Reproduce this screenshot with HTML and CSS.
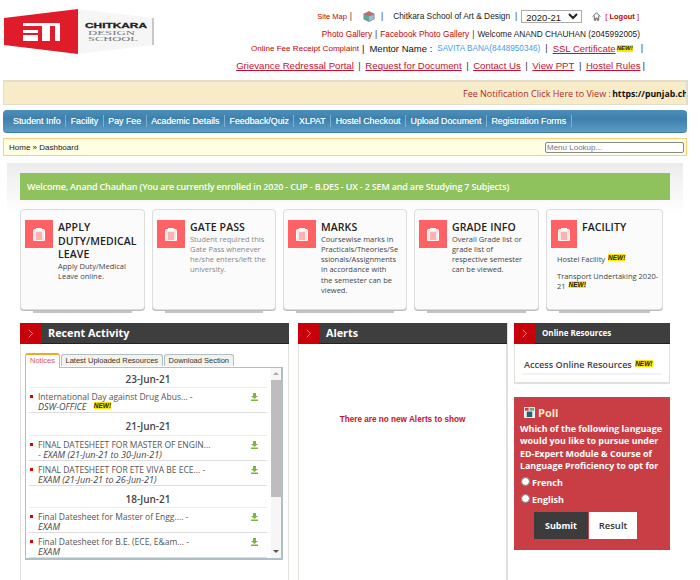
FILE: index.html
```html
<!DOCTYPE html>
<html lang="en">
<head>
<meta charset="utf-8">
<title>Dashboard</title>
<link rel="stylesheet" href="styles.css">
</head>
<body>
<svg class="defs" width="0" height="0" aria-hidden="true">
  <symbol id="clip" viewBox="0 0 12 13"><path d="M1.500 1.500h9a1 1 0 0 1 1 1v9.500a1 1 0 0 1-1 1h-9a1 1 0 0 1-1-1V2.500a1 1 0 0 1 1-1z" fill="#ffe6e6" stroke="#fff"/><path d="M3 0h6v3H3z" fill="#fff"/><path d="M3 5h6M3 7h6M3 9h6M3 11h6" stroke="#fe6265" stroke-width=".8"/></symbol>
  <symbol id="dl" viewBox="0 0 7 8"><path d="M2 0h3v3h2L3.500 6 0 3h2zM0 6.500h7V8H0z" fill="#7cb342"/></symbol>
  <symbol id="chev" viewBox="0 0 8 12"><path d="M1 1l5 5-5 5" fill="none" stroke="#f4c9c9"/></symbol>
</svg>
<div class="page">
  <header class="top">
    <svg class="logo" viewBox="0 0 152 46" width="152" height="46">
      <polygon points="75,0 150,9 150,36 75,45" fill="#f6f6f6"/>
      <polygon points="149,9 151,9 151,36 149,36" fill="#c8c8c8"/>
      <polygon points="1,9 75,0 75,45 1,36" fill="#e01b2a"/>
      <path d="M20 14h37v18h-5V17H47v15h-8V17H20zM20 21h15v3H20zM20 26h15v6H20z" fill="#fff"/>
      <text x="82" y="19" class="logo-a" textLength="62" lengthAdjust="spacingAndGlyphs">CHITKARA</text>
      <text x="85" y="26" class="logo-b" textLength="47" lengthAdjust="spacingAndGlyphs">DESIGN</text>
      <text x="85" y="32" class="logo-b" textLength="50" lengthAdjust="spacingAndGlyphs">SCHOOL</text>
    </svg>
    <div class="links">
      <div class="l1">
        <a class="red sm">Site Map</a><span class="s1">|</span>
        <svg class="cube" viewBox="0 0 14 14" width="14" height="13"><path d="M1 4l6-3 6 3v6l-6 3-6-3z" fill="#889"/><path d="M2 4l5-2 5 2-5 3z" fill="#c66"/><path d="M2 5l5 2v5l-5-2z" fill="#5a9"/><path d="M12 5l-5 2v5l5-2z" fill="#9bd"/></svg>
        <span class="s2">|</span>
        <span class="dark">Chitkara School of Art &amp; Design</span><span class="s3">|</span>
        <select class="year"><option>2020-21</option></select>
        <svg class="home" viewBox="0 0 12 12" width="9" height="9"><path d="M1 6l5-5 5 5M3 5v6h2V8h2v3h2V5" fill="none" stroke="#555" stroke-width="1.200"/></svg>
        <span class="sm red">[ <b>Logout</b> ]</span>
      </div>
      <div class="l2">
        <a class="red">Photo Gallery</a><span class="sep0">|</span>
        <a class="red">Facebook Photo Gallery</a><span class="sep0">|</span>
        <span class="dark">Welcome ANAND CHAUHAN (2045992005)</span>
      </div>
      <div class="l3">
        <a class="red">Online Fee Receipt Complaint</a><span class="big sb">|</span>
        <span class="big mentor">Mentor Name :</span>
        <span class="blue">SAVITA BANA(8448950346)</span>
        <span class="sc">|</span>
        <a class="ul big">SSL Certificate</a><span class="new">NEW!</span>
        <span class="sc sc-end">|</span>
      </div>
      <div class="l4">
        <a class="ul">Grievance Redressal Portal</a><span class="sep">|</span>
        <a class="ul">Request for Document</a><span class="sep">|</span>
        <a class="ul">Contact Us</a><span class="sep">|</span>
        <a class="ul">View PPT</a><span class="sep">|</span>
        <a class="ul">Hostel Rules</a><span class="sep-end">|</span>
      </div>
    </div>
  </header>

  <div class="notice">
    <span class="notice-in"><span class="notice-red">Fee Notification Click Here to View :</span> <b>https://punjab.chitkara.edu.in/</b></span>
  </div>

  <nav class="nav">
    <a>Student Info</a><a>Facility</a><a>Pay Fee</a><a>Academic Details</a><a>Feedback/Quiz</a><a>XLPAT</a><a>Hostel Checkout</a><a>Upload Document</a><a>Registration Forms</a>
  </nav>

  <div class="crumb">
    <span>Home » Dashboard</span>
    <input class="lookup" placeholder="Menu Lookup...">
  </div>

  <div class="band">
    <div class="welcome">Welcome, Anand Chauhan (You are currently enrolled in 2020 - CUP - B.DES - UX - 2 SEM and are Studying 7 Subjects)</div>
  </div>

  <section class="cards">
    <article class="card c1">
      <div class="ico"><svg width="12" height="13"><use href="#clip"/></svg></div>
      <div class="body"><h3>APPLY DUTY/MEDICAL LEAVE</h3><p>Apply Duty/Medical Leave online.</p></div>
    </article>
    <article class="card c2">
      <div class="ico"><svg width="12" height="13"><use href="#clip"/></svg></div>
      <div class="body"><h3>GATE PASS</h3><p class="mute">Student required this Gate Pass whenever he/she enters/left the university.</p></div>
    </article>
    <article class="card c3">
      <div class="ico"><svg width="12" height="13"><use href="#clip"/></svg></div>
      <div class="body"><h3>MARKS</h3><p>Coursewise marks in Practicals/Theories/Sessionals/Assignments in accordance with<br>the semester can be viewed.</p></div>
    </article>
    <article class="card c4">
      <div class="ico"><svg width="12" height="13"><use href="#clip"/></svg></div>
      <div class="body"><h3>GRADE INFO</h3><p>Overall Grade list or grade list of respective semester can be viewed.</p></div>
    </article>
    <article class="card c5">
      <div class="fac-top">
        <div class="ico narrow"><svg width="12" height="13"><use href="#clip"/></svg></div>
        <h3>FACILITY</h3>
      </div>
      <p class="fac">Hostel Facility <span class="new big-new">NEW!</span></p>
      <p class="fac">Transport Undertaking 2020-21 <span class="new big-new">NEW!</span></p>
    </article>
  </section>

  <section class="panels">
    <div class="panel recent">
      <div class="ph"><span class="chev"><svg width="6" height="9"><use href="#chev"/></svg></span><h2>Recent Activity</h2></div>
      <div class="tabs">
        <span class="tab on">Notices</span><span class="tab">Latest Uploaded Resources</span><span class="tab">Download Section</span>
      </div>
      <div class="tabbox">
        <div class="list">
          <div class="date">23-Jun-21</div>
          <div class="item"><i class="bul"></i><div class="txt">International Day against Drug Abus... -<br><em>DSW-OFFICE</em> <span class="new big-new gap">NEW!</span></div><svg class="dl" width="7" height="8"><use href="#dl"/></svg></div>
          <div class="date">21-Jun-21</div>
          <div class="item"><i class="bul"></i><div class="txt">FINAL DATESHEET FOR MASTER OF ENGIN...<br><em>- EXAM (21-Jun-21 to 30-Jun-21)</em></div><svg class="dl" width="7" height="8"><use href="#dl"/></svg></div>
          <div class="item"><i class="bul"></i><div class="txt">FINAL DATESHEET FOR ETE VIVA BE ECE... -<br><em>EXAM (21-Jun-21 to 26-Jun-21)</em></div><svg class="dl" width="7" height="8"><use href="#dl"/></svg></div>
          <div class="date">18-Jun-21</div>
          <div class="item"><i class="bul"></i><div class="txt">Final Datesheet for Master of Engg.... -<br><em>EXAM</em></div><svg class="dl" width="7" height="8"><use href="#dl"/></svg></div>
          <div class="item"><i class="bul"></i><div class="txt">Final Datesheet for B.E. (ECE, E&amp;am... -<br><em>EXAM</em></div><svg class="dl" width="7" height="8"><use href="#dl"/></svg></div>
        </div>
        <div class="bar"><span class="up"></span><span class="thumb"></span><span class="down"></span></div>
      </div>
    </div>

    <div class="panel alerts">
      <div class="ph"><span class="chev"><svg width="6" height="9"><use href="#chev"/></svg></span><h2>Alerts</h2></div>
      <p class="none">There are no new Alerts to show</p>
    </div>

    <aside class="side">
      <div class="panel res">
        <div class="ph"><span class="chev"><svg width="6" height="9"><use href="#chev"/></svg></span><h2 class="small">Online Resources</h2></div>
        <div class="res-row">Access Online Resources <span class="new big-new">NEW!</span></div>
      </div>
      <div class="poll">
        <div class="poll-h"><svg viewBox="0 0 12 12" width="11" height="11"><rect width="12" height="12" fill="#eaf1f4"/><rect x="3" y="5" width="6" height="6" fill="#2e5f6f"/><path d="M1 1h4v3H1z" fill="#d33"/><path d="M6 1h5v3H6z" fill="#6a8"/></svg><span>Poll</span></div>
        <p class="q">Which of the following language would you like to pursue under ED-Expert Module &amp; Course of Language Proficiency to opt for</p>
        <label class="opt"><input type="radio" name="p"> French</label>
        <label class="opt"><input type="radio" name="p"> English</label>
        <div class="btns"><button class="sub">Submit</button><button class="resu">Result</button></div>
      </div>
    </aside>
  </section>
</div>
</body>
</html>
```

FILE: styles.css
```css
* { box-sizing: border-box; }
html, body { margin: 0; padding: 0; background: #fff; }
.defs { position: absolute; }
.page { width: 700px; height: 580px; overflow: hidden; font-family: "Liberation Sans", Arial, sans-serif; }

.top { display: flex; height: 80px; padding: 9px 0 0 3px; }
.logo { flex: none; display: block; }
.logo-a { font: 900 8px "Liberation Sans", sans-serif; fill: #222; stroke: #222; stroke-width: .3px; }
.logo-b { font: 7px "Liberation Serif", serif; fill: #777; }
.links { flex: 1; display: flex; flex-direction: column; align-items: flex-end; padding-right: 55px; }
.l1, .l2, .l3, .l4 { display: flex; align-items: center; white-space: pre; }
.l1 { height: 14px; font-size: 8.350px; margin-right: 6px; color: #333; }
.l2 { height: 15px; margin-top: 3px; font-size: 8.300px; margin-right: 5px; }
.l3 { height: 14px; font-size: 8.100px; margin-right: 2px; }
.l4 { height: 20px; font-size: 9.650px; margin-right: 0; }
.s1 { margin: 0 10px 0 3px; }
.s2 { margin: 0 10px 0 5px; }
.s3 { margin: 0 4px 0 5px; }
.cube { flex: none; }
.home { margin: 0 4px 0 10px; }
.red { color: #c00; }
.sm { font-size: 7.500px; }
.dark { color: #222; }
.blue { color: #4a9cf0; margin-left: 5px; font-size: 8.200px; }
.big { font-size: 9.500px; color: #111; }
.ul, .big.ul { color: #c8102e; text-decoration: underline; }
.sb { margin: 0 5px 0 3px; }
.sep { color: #333; margin: 0 4.500px; }
.sc { color: #333; margin: 0 5px; font-size: 9px; }
.sc-end { margin: 0 0 0 8px; }
.sep0 { color: #333; margin: 0 3px; }
.sep-end { color: #333; margin-left: 2px; }
.year { width: 61px; height: 13px; font: 9.500px "Liberation Sans", sans-serif; padding: 0; background: #fff; border: 1px solid #aaa; color: #222; }
.new { display: inline-block; font: italic 900 6px/7px "Liberation Sans", sans-serif; background: #ffe600; color: #222; margin-left: 1px; vertical-align: 2px; }
.big-new { font-size: 6.500px; }
.gap { margin-left: 5px; }

.notice { height: 25px; margin: 0 12px 0 3px; background: #f7ebc8; border: 1px solid #e2dcc8; border-top-width: 2px; border-right-width: 2px; display: flex; justify-content: flex-end; align-items: center; overflow: hidden; font: 9px "Open Sans", sans-serif; white-space: nowrap; }
.notice-in { display: block; width: 223px; flex: none; overflow: hidden; }
.notice-red { color: #b02a2a; }
.notice b { color: #111; font-size: 8.700px; margin-left: -1px; }

.nav { height: 23px; margin: 5px 13px 0 3px; padding-left: 5.500px; display: flex; align-items: center; border-radius: 4px; background: linear-gradient(#4c8fb8, #3e80ad 40%, #5b9cc4); border-bottom: 1px solid #3a7aa5; }
.nav a { color: #eef6fb; font-size: 8.850px; padding: 0 4.500px; border-right: 1px solid #7fb0d0; line-height: 12px; text-shadow: 0 0 .5px #eef6fb; }

.crumb { height: 18px; margin: 5px 13px 0 3px; background: #fffde2; border: 1px solid #fdcf7a; display: flex; justify-content: space-between; align-items: center; padding: 0 2px 0 5px; font-size: 8px; color: #222; }
.lookup { width: 139px; height: 11px; font: 8px "Liberation Sans", sans-serif; padding: 0 1px; border: 1px solid #888; border-radius: 2px; background: #fff; }
.lookup::placeholder { color: #777; }

.band { height: 52px; margin: 7px 17px 0 7px; padding: 10px 0 0 13px; background: linear-gradient(#ececec, #fff); }
.welcome { width: 650px; height: 27px; background: #8fc15c; color: #fff; font: 600 9px/27px "Open Sans", sans-serif; padding-left: 7px; letter-spacing: -.18px; white-space: nowrap; }

.cards { display: flex; margin: -6px 0 0 20px; gap: 7px; height: 114px; position: relative; }
.card { position: relative; height: 101px; background: #fbfbfb; border: 1px solid #ddd; border-radius: 4px; padding: 10px 6px 0 4px; display: flex; gap: 5px; font-family: "Open Sans", sans-serif; box-shadow: 0 1px 0 #bbb; }
.card::after { content: ""; position: absolute; left: 12px; right: 12px; bottom: -4px; height: 2px; background: #c4c4c4; }
.c1 { width: 125px; } .c2 { width: 124px; } .c3 { width: 124px; padding-right: 6px; } .c4 { width: 125px; padding-right: 12px; } .c5 { width: 117px; display: block; padding-right: 2px; }
.ico { flex: none; width: 28px; height: 28px; background: #fe6265; display: flex; align-items: center; justify-content: center; }
.narrow { width: 26px; }
.body { flex: 1; min-width: 0; padding-top: 1px; }
.card h3 { margin: 0; font: 600 10.500px/13.500px "Open Sans", sans-serif; color: #222; letter-spacing: .1px; }
.card p { margin: -1px 0 0; font-size: 7.500px; line-height: 10.300px; color: #444; overflow-wrap: anywhere; }
.card p.mute { color: #888; }
.fac-top { display: flex; gap: 5px; }
.fac-top h3 { padding-top: 1px; }
.card p.fac { margin: 6px 0 0 6px; line-height: 10px; }
.card p.fac + p.fac { margin-top: 7px; }

.panels { display: flex; margin: 0 0 0 20px; height: 257px; }
.panel { background: #fff; }
.recent { width: 269px; border: 1px solid #e2e0da; border-width: 0 1px; margin-right: 9px; }
.alerts { width: 210px; border: 1px solid #e2e0da; border-width: 0 2px 0 1px; margin-right: 6px; }
.side { width: 156px; }
.ph { height: 21px; background: #3e3e3e; border-bottom: 1px solid #222; display: flex; margin: 0 -1px; }
.chev { width: 21px; height: 21px; background: #c8000a; display: flex; align-items: center; justify-content: center; }
.ph h2 { margin: 0 0 0 7px; font: 700 10.800px/20px "Open Sans", sans-serif; color: #fff; }
.ph h2.small { font-size: 8px; }

.tabs { display: flex; gap: .5px; margin: 9px 0 0 4px; position: relative; z-index: 1; font-size: 7.500px; }
.tab { height: 12px; padding: 0 4px; line-height: 11px; background: #f3f3ec; border: 1px solid #aebfc8; border-bottom: 0; border-radius: 3px 3px 0 0; color: #333; margin-top: 1px; }
.tab.on { height: 15px; margin-top: 0; margin-bottom: -1px; color: #d55; background: #fff; border-top: 2px solid #f5a623; line-height: 11px; }
.tabbox { display: flex; height: 193px; margin: 0 5px 0 4px; border: 1px solid #aebfc8; border-width: 1px 2px 2px 1px; position: relative; overflow: hidden; background: #fff; font-family: "Open Sans", sans-serif; }
.list { width: 238px; margin-left: 3px; flex: none; }
.date { height: 22.500px; padding-top: 3px; text-align: center; font-size: 10px; font-weight: 600; line-height: 21px; color: #444; border-bottom: 1px solid #eee; }
.date:first-child { height: 20px; padding-top: 0; line-height: 22px; }
.item { position: relative; display: flex; padding: 4px 0 0 9px; height: 25px; border-bottom: 1px solid #ddd; font-size: 8.500px; line-height: 10.300px; color: #555; }
.txt { white-space: nowrap; }
.txt em { font-style: italic; color: #444; font-size: 9px; }
.bul { position: absolute; left: 1px; top: 7px; width: 3px; height: 3px; background: #d00; }
.dl { position: absolute; left: 222px; top: 5px; }
.bar { position: absolute; right: 0; top: 0; bottom: 0; width: 10px; background: #f6f6f6; display: flex; flex-direction: column; }
.up { height: 12px; position: relative; }
.up::after { content: ""; position: absolute; left: 2px; top: 4px; border: 3px solid transparent; border-top: 0; border-bottom: 3px solid #aaa; }
.thumb { height: 117px; background: #bdbdbd; }
.down { position: absolute; bottom: 0; left: 0; width: 10px; height: 12px; }
.down::after { content: ""; position: absolute; left: 2px; top: 4px; border: 3px solid transparent; border-bottom: 0; border-top: 3px solid #555; }

.none { margin: 71px 0 0; text-align: center; font-size: 8.200px; font-weight: 700; color: #c8102e; }

.res { height: 61px; border: 1px solid #e2e0da; border-width: 0 1px 2px 1px; }
.res-row { margin: 13px 8px 0 8px; height: 18px; border-bottom: 2px solid #f2f2f2; padding-left: 1px; font: 600 9.100px/16px "Open Sans", sans-serif; color: #444; white-space: nowrap; }
.poll { margin-top: 13px; height: 153px; background: #c93e44; color: #fff; padding: 8px 3px 0 6px; font-family: "Open Sans", sans-serif; }
.poll-h { display: flex; align-items: center; gap: 3px; margin-left: 4px; font-size: 11px; font-weight: 700; color: #fde9c8; height: 15px; }
.q { margin: 3px 0 0; font-size: 8.900px; font-weight: 700; line-height: 12.300px; }
.opt { display: flex; align-items: center; gap: 2px; font-size: 9px; font-weight: 700; height: 17px; }
.q + .opt { margin-top: 2px; }
.opt input { width: 9px; height: 9px; margin: 0 0 2px 1px; }
.btns { display: flex; margin: 4px 0 0 14px; }
.btns button { height: 27px; border: 0; padding: 0; font: 700 9px "Open Sans", sans-serif; }
.sub { width: 54px; background: #3c3c3c; color: #fff; }
.btns .resu { width: 48px; background: #fff; color: #333; font-weight: 600; font-size: 9.500px; margin-left: 1px; }
```
